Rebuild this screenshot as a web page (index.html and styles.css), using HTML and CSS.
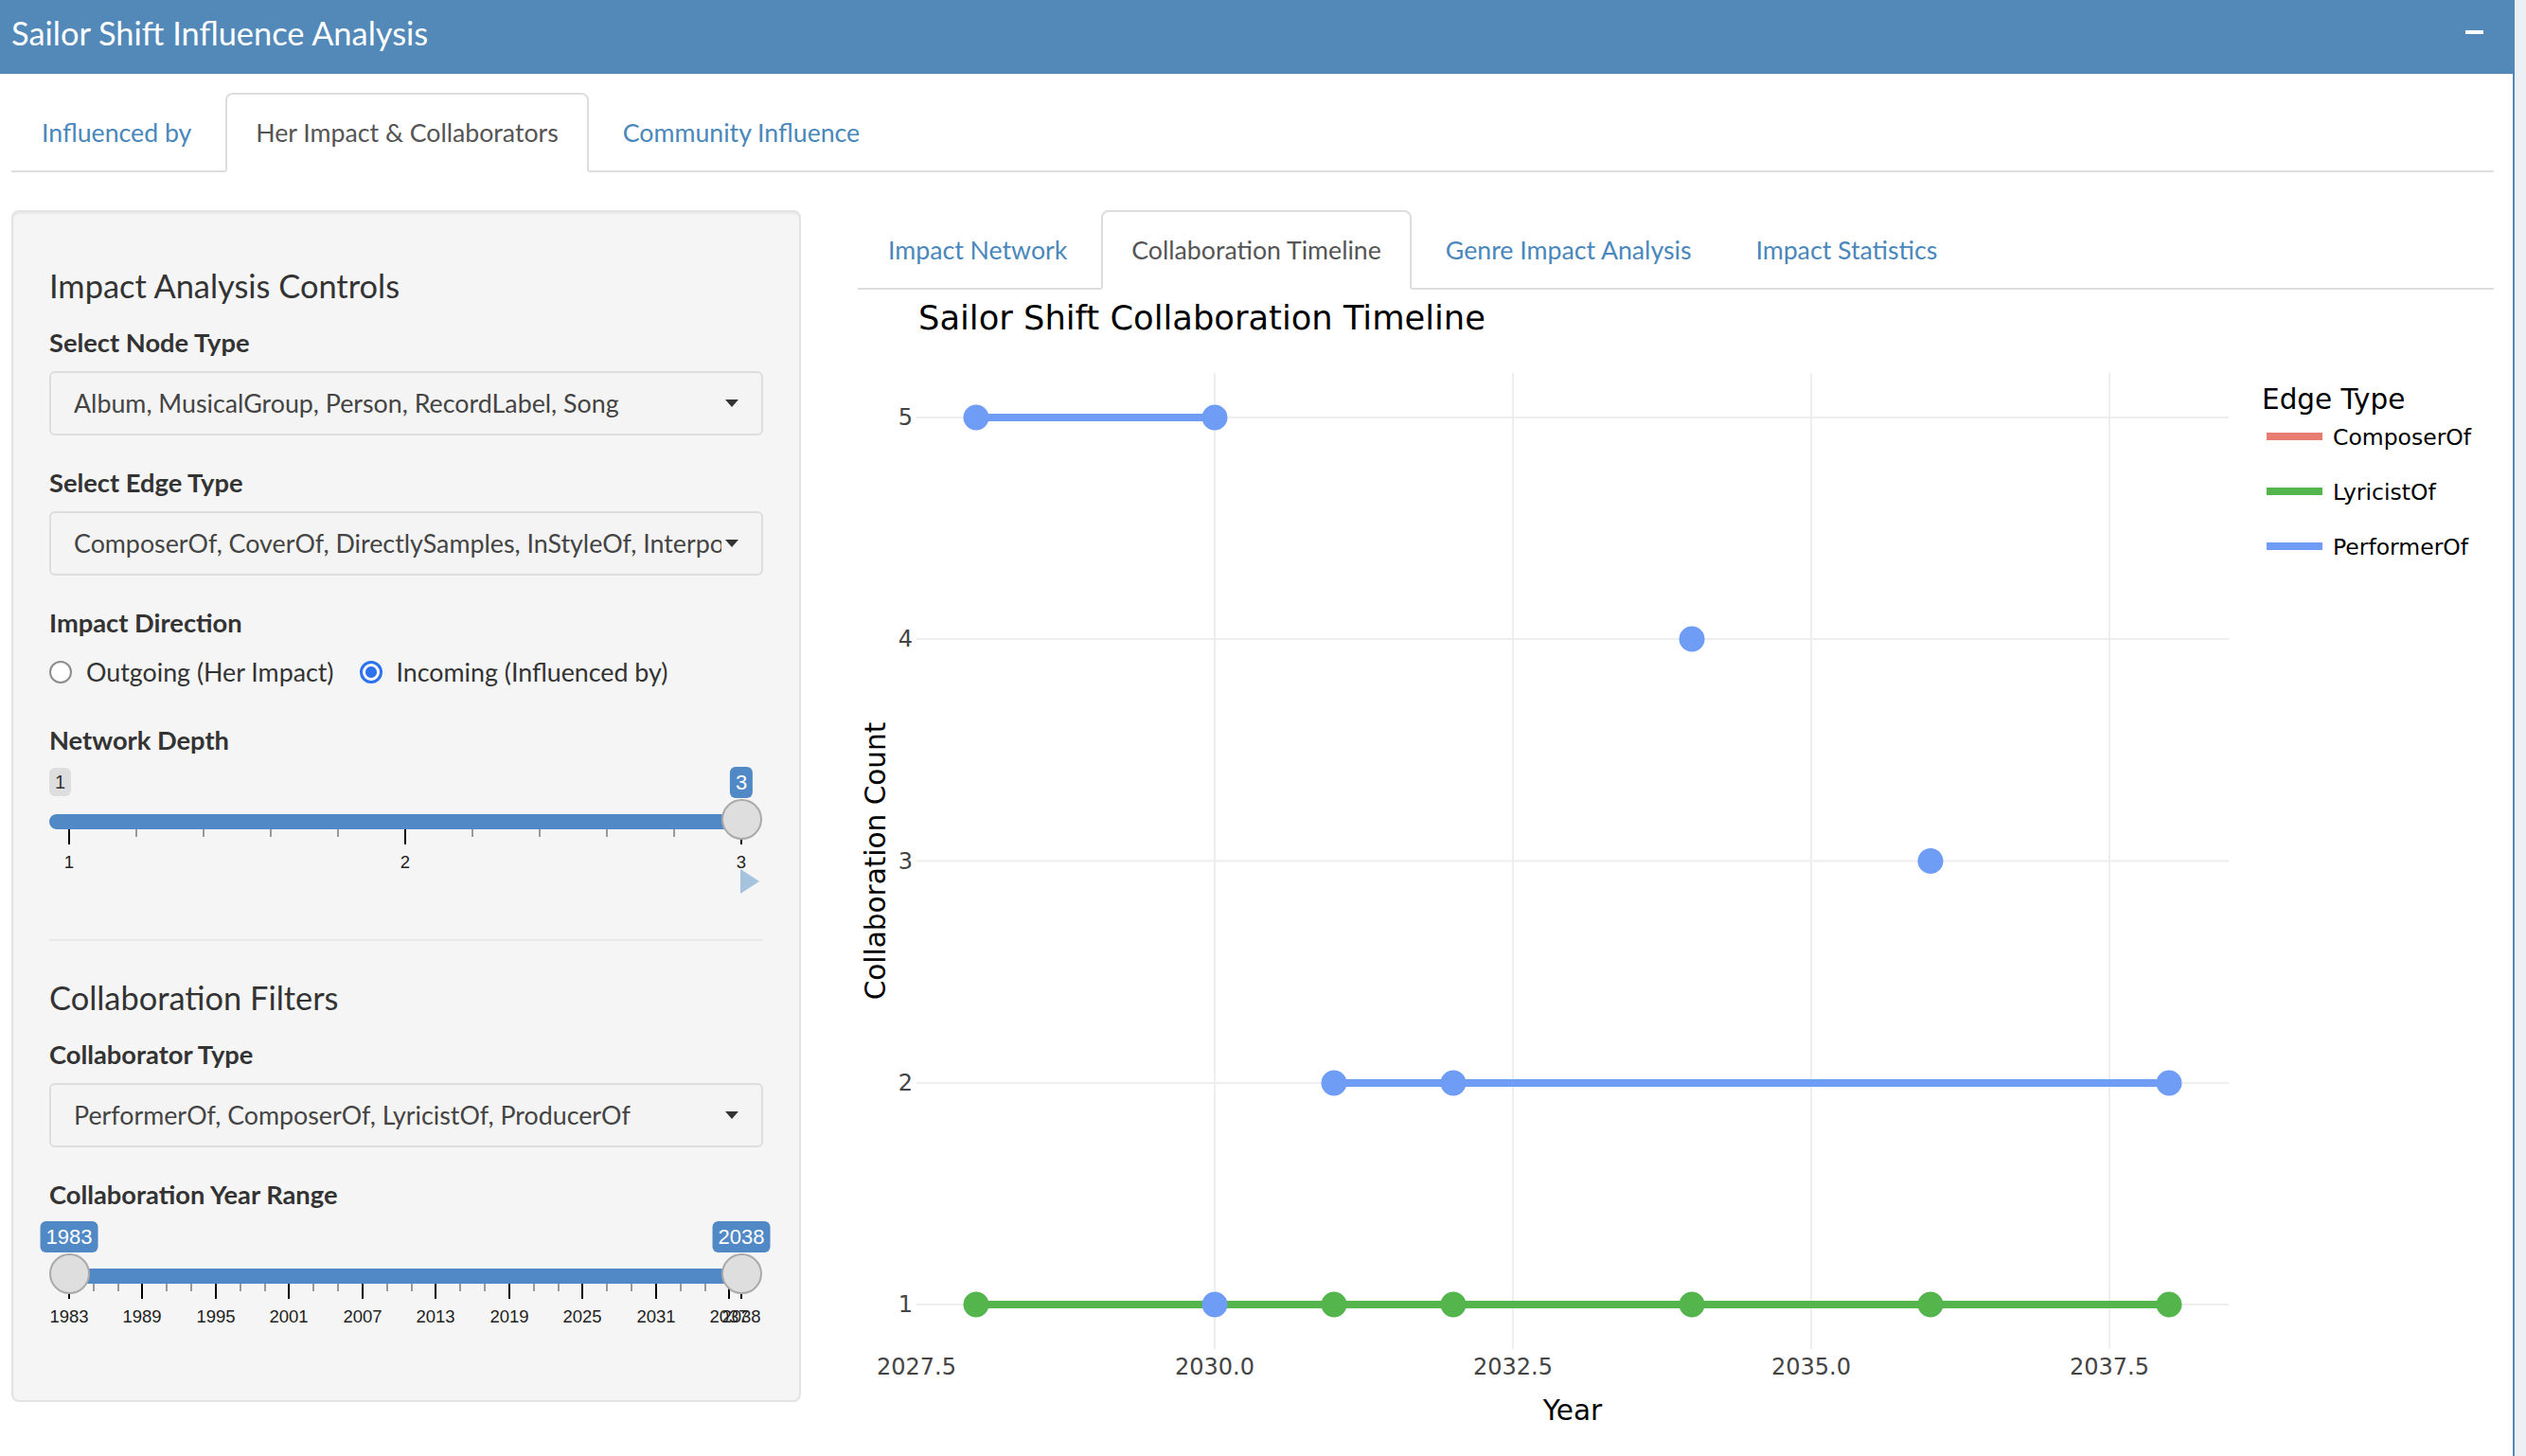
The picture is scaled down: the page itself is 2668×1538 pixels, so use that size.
FILE: index.html
```html
<!DOCTYPE html>
<html lang="en">
<head>
<meta charset="utf-8">
<title>Sailor Shift Influence Analysis</title>
<link rel="stylesheet" href="styles.css">
</head>
<body>
<div class="page">
  <div class="box">
    <div class="box-header">
      <h3 class="box-title">Sailor Shift Influence Analysis</h3>
      <button class="btn-tool" type="button" aria-label="Collapse">
        <svg width="19" height="4" viewBox="0 0 19 4"><rect width="19" height="4" fill="#fff"/></svg>
      </button>
    </div>
    <div class="box-body">
      <ul class="nav-tabs">
        <li><a>Influenced by</a></li>
        <li class="active"><a>Her Impact &amp; Collaborators</a></li>
        <li><a>Community Influence</a></li>
      </ul>
      <div class="tab-content">
        <div class="row">
          <div class="col-side">
            <div class="well">
              <h4>Impact Analysis Controls</h4>
              <div class="form-group">
                <label class="control-label">Select Node Type</label>
                <div class="picker"><span class="filter-option">Album, MusicalGroup, Person, RecordLabel, Song</span><span class="caret"></span></div>
              </div>
              <div class="form-group">
                <label class="control-label">Select Edge Type</label>
                <div class="picker"><span class="filter-option">ComposerOf, CoverOf, DirectlySamples, InStyleOf, InterpolatesFrom, LyricistOf</span><span class="caret"></span></div>
              </div>
              <div class="form-group">
                <label class="control-label">Impact Direction</label>
                <div class="radios">
                  <span class="radio-inline"><span class="radio-dot"></span>Outgoing (Her Impact)</span>
                  <span class="radio-inline"><span class="radio-dot checked"></span>Incoming (Influenced by)</span>
                </div>
              </div>
              <div class="form-group">
                <label class="control-label">Network Depth</label>
                <div class="irs irs-depth">
                  <span class="irs-min">1</span>
                  <span class="irs-bar" style="left:0;width:731px"></span>
                  <span class="irs-grid-pol big" style="left:74px"></span>
                  <span class="irs-grid-pol" style="left:145px"></span>
                  <span class="irs-grid-pol" style="left:216px"></span>
                  <span class="irs-grid-pol" style="left:287px"></span>
                  <span class="irs-grid-pol" style="left:358px"></span>
                  <span class="irs-grid-pol big" style="left:429px"></span>
                  <span class="irs-grid-pol" style="left:500px"></span>
                  <span class="irs-grid-pol" style="left:571px"></span>
                  <span class="irs-grid-pol" style="left:642px"></span>
                  <span class="irs-grid-pol" style="left:713px"></span>
                  <span class="irs-grid-pol big" style="left:784px"></span>
                  <span class="irs-grid-text" style="left:74px">1</span>
                  <span class="irs-grid-text" style="left:429px">2</span>
                  <span class="irs-grid-text" style="left:784px">3</span>
                  <span class="irs-handle" style="left:709.5px"></span>
                  <span class="irs-single" style="left:731px">3</span>
                  <svg class="play" width="20" height="26" viewBox="0 0 20 26"><polygon points="0,0 20,13 0,26" fill="#a6c3dd"/></svg>
                </div>
              </div>
              <hr>
              <h4>Collaboration Filters</h4>
              <div class="form-group">
                <label class="control-label">Collaborator Type</label>
                <div class="picker"><span class="filter-option">PerformerOf, ComposerOf, LyricistOf, ProducerOf</span><span class="caret"></span></div>
              </div>
              <div class="form-group">
                <label class="control-label">Collaboration Year Range</label>
                <div class="irs irs-years">
                  <span class="irs-bar" style="left:21px;width:710px"></span>
                  <span class="irs-grid-pol big" style="left:74px"></span>
                  <span class="irs-grid-pol" style="left:100px"></span>
                  <span class="irs-grid-pol" style="left:126px"></span>
                  <span class="irs-grid-pol big" style="left:151px"></span>
                  <span class="irs-grid-pol" style="left:177px"></span>
                  <span class="irs-grid-pol" style="left:203px"></span>
                  <span class="irs-grid-pol big" style="left:229px"></span>
                  <span class="irs-grid-pol" style="left:255px"></span>
                  <span class="irs-grid-pol" style="left:281px"></span>
                  <span class="irs-grid-pol big" style="left:306px"></span>
                  <span class="irs-grid-pol" style="left:332px"></span>
                  <span class="irs-grid-pol" style="left:358px"></span>
                  <span class="irs-grid-pol big" style="left:384px"></span>
                  <span class="irs-grid-pol" style="left:410px"></span>
                  <span class="irs-grid-pol" style="left:436px"></span>
                  <span class="irs-grid-pol big" style="left:461px"></span>
                  <span class="irs-grid-pol" style="left:487px"></span>
                  <span class="irs-grid-pol" style="left:513px"></span>
                  <span class="irs-grid-pol big" style="left:539px"></span>
                  <span class="irs-grid-pol" style="left:565px"></span>
                  <span class="irs-grid-pol" style="left:591px"></span>
                  <span class="irs-grid-pol big" style="left:616px"></span>
                  <span class="irs-grid-pol" style="left:642px"></span>
                  <span class="irs-grid-pol" style="left:668px"></span>
                  <span class="irs-grid-pol big" style="left:694px"></span>
                  <span class="irs-grid-pol" style="left:720px"></span>
                  <span class="irs-grid-pol" style="left:746px"></span>
                  <span class="irs-grid-pol big" style="left:771px"></span>
                  <span class="irs-grid-pol big" style="left:784px"></span>
                  <span class="irs-grid-text" style="left:74px">1983</span>
                  <span class="irs-grid-text" style="left:151px">1989</span>
                  <span class="irs-grid-text" style="left:229px">1995</span>
                  <span class="irs-grid-text" style="left:306px">2001</span>
                  <span class="irs-grid-text" style="left:384px">2007</span>
                  <span class="irs-grid-text" style="left:461px">2013</span>
                  <span class="irs-grid-text" style="left:539px">2019</span>
                  <span class="irs-grid-text" style="left:616px">2025</span>
                  <span class="irs-grid-text" style="left:694px">2031</span>
                  <span class="irs-grid-text" style="left:771px">2037</span>
                  <span class="irs-grid-text" style="left:784px">2038</span>
                  <span class="irs-handle" style="left:0"></span>
                  <span class="irs-handle" style="left:709.5px"></span>
                  <span class="irs-single" style="left:21px">1983</span>
                  <span class="irs-single" style="left:731px">2038</span>
                </div>
              </div>
            </div>
          </div>
          <div class="col-main">
            <ul class="nav-tabs">
              <li><a>Impact Network</a></li>
              <li class="active"><a>Collaboration Timeline</a></li>
              <li><a>Genre Impact Analysis</a></li>
              <li><a>Impact Statistics</a></li>
            </ul>
            <div class="plot">
              <svg class="chart" width="1728" height="1232" viewBox="0 0 1728 1232">
                <text class="chart-title" x="64" y="42">Sailor Shift Collaboration Timeline</text>
                <g class="grid">
                  <line x1="62" x2="1448" y1="1072" y2="1072"/>
                  <line x1="62" x2="1448" y1="838" y2="838"/>
                  <line x1="62" x2="1448" y1="603.5" y2="603.5"/>
                  <line x1="62" x2="1448" y1="369" y2="369"/>
                  <line x1="62" x2="1448" y1="135" y2="135"/>
                  <line x1="377" x2="377" y1="88" y2="1119"/>
                  <line x1="692" x2="692" y1="88" y2="1119"/>
                  <line x1="1007" x2="1007" y1="88" y2="1119"/>
                  <line x1="1322" x2="1322" y1="88" y2="1119"/>
                </g>
                <g class="ytick">
                  <text x="58" y="1080">1</text>
                  <text x="58" y="846">2</text>
                  <text x="58" y="611.5">3</text>
                  <text x="58" y="377">4</text>
                  <text x="58" y="143">5</text>
                </g>
                <g class="xtick">
                  <text x="62" y="1146">2027.5</text>
                  <text x="377" y="1146">2030.0</text>
                  <text x="692" y="1146">2032.5</text>
                  <text x="1007" y="1146">2035.0</text>
                  <text x="1322" y="1146">2037.5</text>
                </g>
                <text class="axis-title" x="755" y="1194" text-anchor="middle">Year</text>
                <text class="axis-title" x="29" y="603.5" text-anchor="middle" transform="rotate(-90 29 603.5)">Collaboration Count</text>
                <g class="trace blue">
                  <polyline points="125,135 377,135"/>
                  <polyline points="503,838 629,838 1385,838"/>
                  <circle cx="125" cy="135" r="13.5"/>
                  <circle cx="377" cy="135" r="13.5"/>
                  <circle cx="881" cy="369" r="13.5"/>
                  <circle cx="1133" cy="603.5" r="13.5"/>
                  <circle cx="503" cy="838" r="13.5"/>
                  <circle cx="629" cy="838" r="13.5"/>
                  <circle cx="1385" cy="838" r="13.5"/>
                </g>
                <g class="trace green">
                  <polyline points="125,1072 1385,1072"/>
                  <circle cx="125" cy="1072" r="13.5"/>
                  <circle cx="503" cy="1072" r="13.5"/>
                  <circle cx="629" cy="1072" r="13.5"/>
                  <circle cx="881" cy="1072" r="13.5"/>
                  <circle cx="1133" cy="1072" r="13.5"/>
                  <circle cx="1385" cy="1072" r="13.5"/>
                </g>
                <g class="trace blue">
                  <circle cx="377" cy="1072" r="13.5"/>
                </g>
                <g class="legend">
                  <text class="legend-title" x="1483" y="126">Edge Type</text>
                  <line class="sw red" x1="1488" x2="1547" y1="155" y2="155"/>
                  <text x="1558" y="164">ComposerOf</text>
                  <line class="sw green" x1="1488" x2="1547" y1="213" y2="213"/>
                  <text x="1558" y="222">LyricistOf</text>
                  <line class="sw blue" x1="1488" x2="1547" y1="271" y2="271"/>
                  <text x="1558" y="280">PerformerOf</text>
                </g>
              </svg>
            </div>
          </div>
        </div>
      </div>
    </div>
  </div>
</div>
</body>
</html>
```
FILE: styles.css
```css
html, body {
  margin: 0;
  padding: 0;
}
body {
  width: 2668px;
  height: 1538px;
  overflow: hidden;
  background: #ecf0f5;
  font-family: Lato, "Open Sans", sans-serif;
  color: #333;
}
.page {
  padding-right: 12px;
}
.box {
  background: #fff;
  border-right: 2px solid #5289b8;
  min-height: 1538px;
}
.box-header {
  height: 78px;
  box-sizing: border-box;
  background: #5289b8;
  display: flex;
  align-items: flex-start;
  justify-content: space-between;
  padding: 15px 31px 0 12px;
}
.box-title {
  margin: 0;
  font-size: 34.4px;
  line-height: 40px;
  font-weight: 400;
  color: #fff;
}
.btn-tool {
  border: 0;
  background: none;
  padding: 0;
  margin-top: 17px;
  line-height: 0;
}
.box-body {
  padding: 20px 20px 0 12px;
}
.nav-tabs {
  list-style: none;
  margin: 0;
  padding: 0;
  display: flex;
  border-bottom: 2px solid #ddd;
}
.nav-tabs li {
  margin: 0 4px -2px 0;
}
.nav-tabs a {
  display: block;
  padding: 20px 30px;
  line-height: 40px;
  font-size: 26.7px;
  color: #4a87bb;
  border: 2px solid transparent;
  border-radius: 8px 8px 0 0;
}
.nav-tabs .active a {
  color: #555;
  background: #fff;
  border-color: #ddd #ddd transparent;
}
.tab-content {
  padding-top: 40px;
}
.row {
  display: flex;
  gap: 60px;
}
.col-side {
  width: 834px;
  flex: none;
}
.col-main {
  width: 1728px;
  flex: none;
}
.well {
  background: #f5f5f5;
  border: 2px solid #e3e3e3;
  border-radius: 8px;
  padding: 38px;
  box-shadow: inset 0 2px 2px rgba(0, 0, 0, 0.05);
}
.well h4 {
  font-size: 34.4px;
  line-height: 40px;
  font-weight: 400;
  margin: 20px 0;
  color: #333;
}
.well hr {
  border: 0;
  border-top: 2px solid #e9e9e9;
  margin: 40px 0;
}
.form-group {
  margin-bottom: 30px;
}
.control-label {
  display: block;
  font-size: 27.3px;
  line-height: 40px;
  font-weight: 700;
  margin-bottom: 10px;
  color: #333;
}
.picker {
  height: 68px;
  box-sizing: border-box;
  border: 2px solid #ddd;
  border-radius: 6px;
  background: #f4f4f4;
  display: flex;
  align-items: center;
  padding: 0 24px;
}
.filter-option {
  flex: 1;
  min-width: 0;
  overflow: hidden;
  white-space: nowrap;
  font-size: 26.8px;
  color: #444;
  margin-right: 4px;
}
.caret {
  flex: none;
  width: 0;
  height: 0;
  border-left: 7px solid transparent;
  border-right: 7px solid transparent;
  border-top: 8px solid #333;
}
.radios {
  height: 44px;
  display: flex;
  align-items: center;
}
.radio-inline {
  display: flex;
  align-items: center;
  font-size: 26.8px;
  color: #333;
  margin-right: 27px;
}
.radio-dot {
  width: 24px;
  height: 24px;
  box-sizing: border-box;
  border-radius: 50%;
  border: 2px solid #8d8d8d;
  background: #fff;
  margin-right: 15px;
}
.radio-dot.checked {
  border: 3px solid #2e73ee;
  background: radial-gradient(circle, #2e73ee 0 5.5px, #fff 6.5px);
}
.irs {
  position: relative;
  margin-top: -2px;
  font-family: "Liberation Sans", Arial, sans-serif;
}
.irs-depth {
  height: 142px;
}
.irs-years {
  height: 121px;
}
.irs-min {
  position: absolute;
  left: 0;
  top: 1px;
  height: 30px;
  line-height: 30px;
  padding: 0 6px;
  font-size: 20px;
  color: #333;
  background: #dedede;
  border-radius: 6px;
}
.irs-single {
  position: absolute;
  top: 0;
  height: 33px;
  line-height: 33px;
  padding: 0 6px;
  font-size: 22px;
  color: #fff;
  background: #5189c6;
  border-radius: 6px;
  transform: translateX(-50%);
}
.irs-bar {
  position: absolute;
  top: 50px;
  height: 16px;
  background: #5189c6;
}
.irs-depth .irs-bar {
  border-radius: 8px 0 0 8px;
}
.irs-handle {
  position: absolute;
  top: 34px;
  width: 43px;
  height: 43px;
  box-sizing: border-box;
  border-radius: 50%;
  background: #dedede;
  border: 2px solid #aaa;
}
.irs-grid-pol {
  position: absolute;
  top: 66px;
  width: 2px;
  height: 8px;
  margin-left: -54px;
  background: #999;
}
.irs-grid-pol.big {
  height: 16px;
  background: #000;
}
.irs-grid-text {
  position: absolute;
  top: 92px;
  font-size: 18.5px;
  line-height: 18px;
  color: #222;
  transform: translateX(-50%);
  margin-left: -53px;
}
.play {
  position: absolute;
  left: 730px;
  top: 108px;
}
.plot {
  line-height: 0;
}
.chart {
  display: block;
  font-family: "DejaVu Sans", Verdana, sans-serif;
}
.chart-title {
  font-size: 35.3px;
  fill: #000;
}
.grid line {
  stroke: #eee;
  stroke-width: 2;
}
.ytick text {
  font-size: 24px;
  fill: #444;
  text-anchor: end;
}
.xtick text {
  font-size: 24px;
  fill: #444;
  text-anchor: middle;
}
.axis-title {
  font-size: 29.5px;
  fill: #000;
}
.trace polyline {
  fill: none;
  stroke-width: 8;
}
.trace.blue polyline { stroke: #6f9cf5; }
.trace.blue circle { fill: #6f9cf5; }
.trace.green polyline { stroke: #53b54c; }
.trace.green circle { fill: #53b54c; }
.legend text {
  font-size: 23.5px;
  fill: #000;
}
.legend .legend-title {
  font-size: 29.5px;
}
.sw {
  stroke-width: 8;
}
.sw.red { stroke: #e97c71; }
.sw.green { stroke: #53b54c; }
.sw.blue { stroke: #6f9cf5; }
```
